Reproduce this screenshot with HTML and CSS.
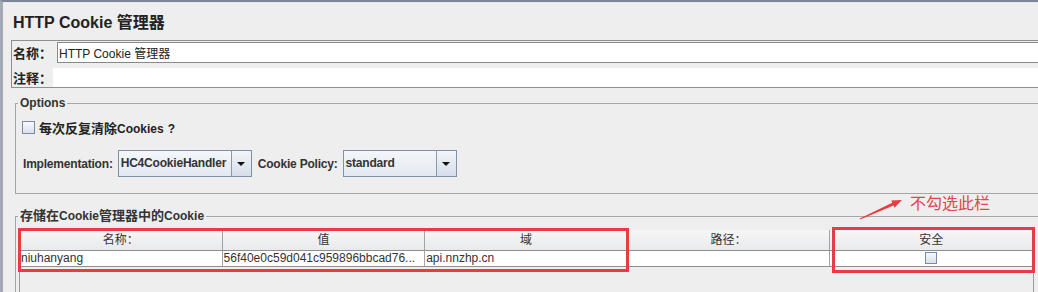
FILE: index.html
```html
<!DOCTYPE html>
<html lang="zh-CN">
<head>
    <meta charset="UTF-8">
    <meta name="viewport" content="width=device-width, initial-scale=1.0">
    <title>HTTP Cookie 管理器</title>
    <link rel="stylesheet" href="styles.css">
</head>
<body>

<div class="frame">
    <h2 class="title">HTTP Cookie 管理器</h2>

    <div class="name-panel">
        <div class="row row-name">
            <label class="field-label" for="name">名称：</label>
            <input type="text" id="name" class="text-field" value="HTTP Cookie 管理器">
        </div>
        <div class="row row-comment">
            <label class="field-label" for="comment">注释：</label>
            <input type="text" id="comment" class="text-field plain">
        </div>
    </div>

    <fieldset class="group options">
        <legend>Options</legend>
        <label class="check-row">
            <span class="check"></span>
            <span><span class="zh">每次反复清除</span>Cookies<span class="help">?</span></span>
        </label>
        <div class="combo-row">
            <span class="combo-label">Implementation:</span>
            <div class="combo combo-impl">
                <span class="combo-text">HC4CookieHandler</span>
                <span class="combo-btn"><svg width="8" height="4" viewBox="0 0 8 4"><polygon points="0,0 8,0 4,4" fill="#111"/></svg></span>
            </div>
            <span class="combo-label policy-label">Cookie Policy:</span>
            <div class="combo combo-policy">
                <span class="combo-text">standard</span>
                <span class="combo-btn"><svg width="8" height="4" viewBox="0 0 8 4"><polygon points="0,0 8,0 4,4" fill="#111"/></svg></span>
            </div>
        </div>
    </fieldset>

    <fieldset class="group cookies">
        <legend><span class="zh">存储在</span>Cookie<span class="zh">管理器中的</span>Cookie</legend>
        <div class="scroll-pane">
            <table class="cookie-table">
                <thead>
                    <tr><th>名称：</th><th>值</th><th>域</th><th>路径：</th><th>安全</th></tr>
                </thead>
                <tbody>
                    <tr>
                        <td>niuhanyang</td>
                        <td>56f40e0c59d041c959896bbcad76...</td>
                        <td>api.nnzhp.cn</td>
                        <td></td>
                        <td class="center"><span class="check"></span></td>
                    </tr>
                </tbody>
            </table>
        </div>
    </fieldset>
</div>

<!-- annotation drawn over the screenshot -->
<div class="mark mark-left"></div>
<div class="mark mark-right"></div>
<svg class="mark-arrow" width="52" height="28" viewBox="0 0 52 28">
    <polygon points="4.8,23.5 37.3,7.8 36.2,5.5 47,5 39.5,12.8 38.5,10.5 5.2,24.5" fill="#e63c44"/>
</svg>
<div class="mark-note">不勾选此栏</div>

</body>
</html>
```

FILE: styles.css
```css
body {
    margin: 0;
    padding: 0;
    background-color: #eeeeee;
    font-family: "Liberation Sans", "Noto Sans CJK SC", sans-serif;
    font-size: 12px;
    color: #222;
    height: 292px;
    overflow: hidden;
    position: relative;
}

.frame {
    width: 1060px;
    height: 292px;
    overflow: hidden;
    border-top: 2px solid #7d8598;
    border-left: 3px solid #a4a9b6;
    box-shadow: inset 0 1px 0 #e2ecec;
}

.title {
    margin: 11px 0 0 10px;
    font-size: 16px;
    line-height: 20px;
    font-weight: bold;
    color: #222;
}

.zh {
    font-size: 13px;
}

/* name / comment */
.name-panel {
    margin: 7px 0 0 8px;
    padding: 1px 0 0 1px;
    border: 1px solid #8f8f8f;
}

.row {
    display: flex;
    align-items: center;
}

.row-name {
    height: 21px;
}

.row-comment {
    height: 19px;
    margin-top: 5px;
}

.field-label {
    font-size: 13px;
    font-weight: bold;
    color: #222;
}

.row-name .field-label {
    width: 44px;
}

.row-comment .field-label {
    width: 40px;
}

.text-field {
    flex: 1;
    height: 21px;
    margin: 0;
    padding: 0 0 0 1px;
    box-sizing: border-box;
    border: 1px solid #8a8a8a;
    border-right: none;
    background: #fff;
    font-family: "Liberation Sans", "Noto Sans CJK SC", sans-serif;
    font-size: 12px;
    color: #222;
    outline: none;
}

.text-field.plain {
    height: 19px;
    border: none;
}

/* titled groups */
.group {
    margin: 7px 0 0 12px;
    padding: 0;
    border: 1px solid #a6a6a6;
}

.group legend {
    margin-left: 2px;
    padding: 0 2px;
    line-height: 16px;
    font-weight: bold;
    color: #333;
}

.options {
    padding-bottom: 16px;
}

.check-row {
    display: flex;
    align-items: center;
    gap: 4px;
    height: 16px;
    margin: 8px 0 0 6px;
    font-weight: bold;
    color: #222;
}

.help {
    margin-left: 4px;
}

.check {
    display: inline-block;
    width: 13px;
    height: 13px;
    box-sizing: border-box;
    border: 1px solid #7b8aa0;
    background: linear-gradient(#f7f9fc, #d9e1eb);
    vertical-align: middle;
}

.combo-row {
    display: flex;
    align-items: center;
    height: 27px;
    margin: 15px 0 0 7px;
}

.combo-label {
    font-weight: bold;
    color: #333;
    letter-spacing: -0.2px;
}

.policy-label {
    margin-left: 6px;
}

.combo {
    display: flex;
    height: 27px;
    box-sizing: border-box;
    border: 1px solid #7f8fa6;
    margin-left: 5px;
}

.combo-impl {
    width: 134px;
}

.combo-policy {
    width: 114px;
}

.combo-text {
    flex: 1;
    overflow: hidden;
    white-space: nowrap;
    padding-left: 2px;
    line-height: 25px;
    font-weight: bold;
    letter-spacing: -0.2px;
    color: #333;
    background: linear-gradient(#f4f6fa, #e3e9f1);
}

.combo-btn {
    width: 19px;
    flex: none;
    display: flex;
    align-items: center;
    justify-content: center;
    border-left: 1px solid #8a99ae;
    background: linear-gradient(#f2f5f9, #d5dee9);
}

/* cookie table */
.cookies {
    margin-top: 14px;
}

.scroll-pane {
    width: 1015px;
    height: 100px;
    margin: 6px 0 0 3px;
    box-sizing: border-box;
    border: 1px solid #9a9a9a;
    border-top: none;
    background: #eeeeee;
}

.cookie-table {
    width: 100%;
    table-layout: fixed;
    border-collapse: separate;
    border-spacing: 0;
}

.cookie-table th {
    padding: 0;
    line-height: 20px;
    font-weight: normal;
    font-size: 12px;
    color: #333;
    text-align: center;
    background: linear-gradient(#f6f6f6, #e9eaec);
    border-right: 1px solid #a3a3a3;
    border-bottom: 1px solid #8e8e8e;
}

.cookie-table td {
    padding: 0 0 0 1px;
    line-height: 15px;
    height: 15px;
    background: #fff;
    color: #333;
    white-space: nowrap;
    overflow: hidden;
    border-right: 1px solid #a3a3a3;
    border-bottom: 1px solid #8e8e8e;
}

.cookie-table td.center {
    text-align: center;
    padding: 0;
}

.cookie-table td .check {
    width: 12px;
    height: 12px;
    vertical-align: -2px;
}

/* red annotation */
.mark {
    position: absolute;
    box-sizing: border-box;
    border: 3px solid #e63c44;
}

.mark-left {
    left: 18px;
    top: 228px;
    width: 611px;
    height: 44px;
}

.mark-right {
    left: 832px;
    top: 227px;
    width: 203px;
    height: 46px;
}

.mark-arrow {
    position: absolute;
    left: 855px;
    top: 195px;
}

.mark-note {
    position: absolute;
    left: 910px;
    top: 192px;
    font-family: "Noto Sans CJK SC", sans-serif;
    font-size: 16px;
    line-height: 20px;
    color: #e0454c;
}
```
